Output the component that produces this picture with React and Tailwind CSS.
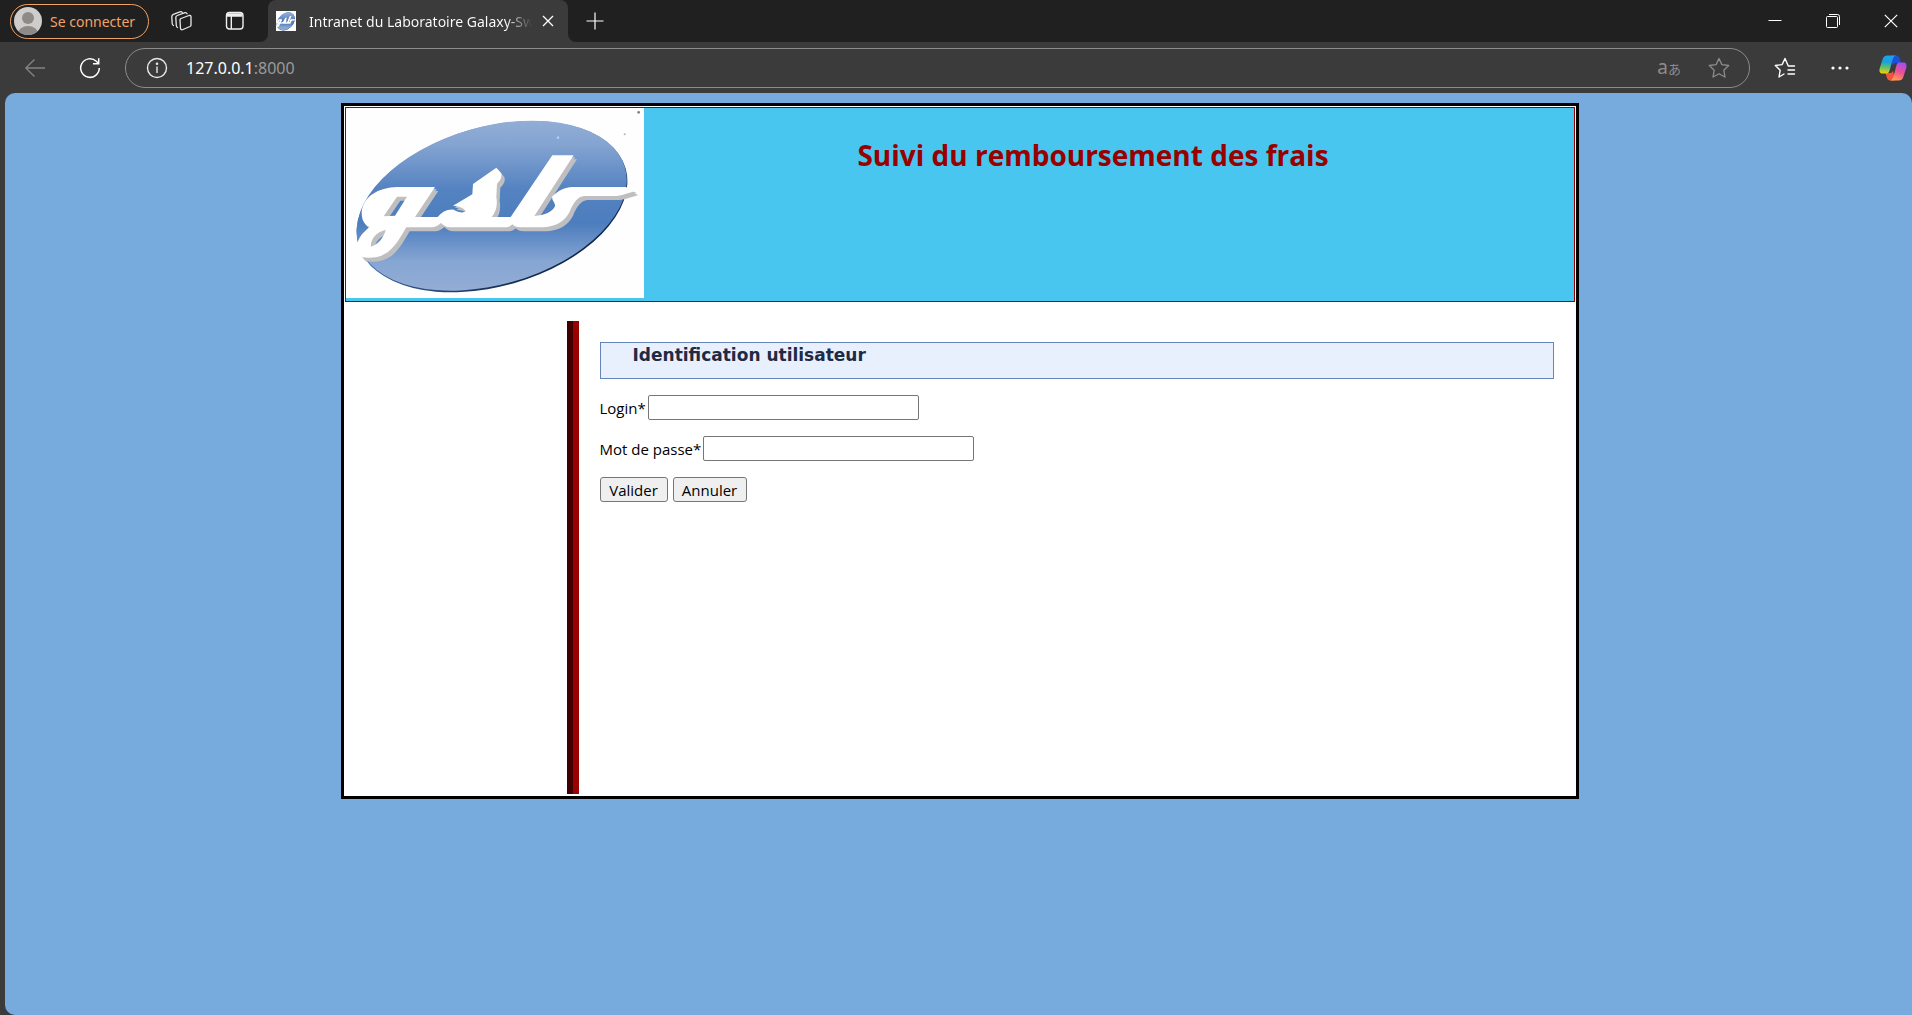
import React from 'react';

const GsbLogo = ({ id, className }) => (
  <svg viewBox="33 39 894 570" preserveAspectRatio="none" className={className} role="img" aria-label="Laboratoire Galaxy-Swiss Bourdin">
    <defs>
      <linearGradient id={`${id}-fill`} x1="0" y1="0" x2="0" y2="1">
        <stop offset="0" stopColor="#93aed6" />
        <stop offset="0.15" stopColor="#83a3d1" />
        <stop offset="0.4" stopColor="#5583c1" />
        <stop offset="0.6" stopColor="#4c7dbe" />
        <stop offset="0.82" stopColor="#86a5d2" />
        <stop offset="1" stopColor="#93aed6" />
      </linearGradient>
      <linearGradient id={`${id}-edge`} x1="0" y1="0" x2="0.6" y2="1">
        <stop offset="0" stopColor="#6c8fc4" />
        <stop offset="0.5" stopColor="#3f6aa8" />
        <stop offset="1" stopColor="#12284a" />
      </linearGradient>
      <clipPath id={`${id}-clip`}>
        <ellipse cx="470" cy="332" rx="416" ry="237" transform="rotate(-16 470 332)" />
      </clipPath>
      <path
        id={`${id}-text`}
        fillRule="evenodd"
        d="M300 276 L186 276 C130 278 84 304 80 352 C80 376 88 390 104 396 C84 412 68 430 66 452 C68 468 76 480 82 487 C110 491 136 487 158 472 C184 452 200 420 214 397 L292 397 C304 396 310 390 318 384 C326 392 334 397 346 397 L515 397 C522 396 528 392 532 388 C538 394 544 397 556 397 L626 397 C664 394 690 378 704 350 C716 322 728 304 748 303 L845 303 C868 300 886 292 900 288 L872 276 L712 276 C690 277 670 286 652 304 C648 316 662 322 660 334 C652 350 630 362 598 363 L716 181 L652 181 L527 366 L470 366 C484 350 488 330 484 306 L486 266 C496 256 502 246 498 234 L484 218 L414 267 L412 298 L354 332 C372 334 386 338 392 348 C384 356 372 352 356 344 C336 342 320 352 308 366 L240 366 Z
           M186 305 L216 305 L180 362 L146 364 Z
           M108 455 C106 434 122 412 152 404 C146 428 132 446 108 455 Z"
      />
    </defs>
    <rect x="33" y="39" width="894" height="570" fill="#fefefe" />
    <ellipse cx="471" cy="335" rx="417" ry="239" transform="rotate(-16 471 335)" fill={`url(#${id}-edge)`} />
    <g clipPath={`url(#${id}-clip)`}>
      <rect x="50" y="74" width="840" height="518" fill={`url(#${id}-fill)`} />
    </g>
    <use href={`#${id}-text`} x="10" y="12" fill="#bfbfc1" />
    <use href={`#${id}-text`} x="5" y="6" fill="#bfbfc1" />
    <use href={`#${id}-text`} fill="#ffffff" />
    <circle cx="669" cy="128" r="4" fill="#a9d0ee" />
    <circle cx="911" cy="52" r="4" fill="#7d7d7d" />
    <circle cx="869" cy="118" r="3" fill="#b5b5b5" />
  </svg>
);

const TabBar = () => (
  <div className="flex h-[42px] items-center bg-[#202020] text-white">
    <button className="ml-[10px] flex h-[35px] w-[139px] shrink-0 items-center gap-2 rounded-full border border-[#f0a368] pl-[3px] text-[14px] whitespace-nowrap text-[#f0a368]">
      <svg viewBox="0 0 28 28" className="size-7 shrink-0">
        <defs>
          <clipPath id="avatar">
            <circle cx="14" cy="14" r="14" />
          </clipPath>
        </defs>
        <g clipPath="url(#avatar)">
          <rect width="28" height="28" fill="#cfcdcb" />
          <circle cx="14" cy="11" r="6" fill="#8d8a88" />
          <ellipse cx="14" cy="27" rx="10" ry="8" fill="#8d8a88" />
        </g>
      </svg>
      Se connecter
    </button>
    <button aria-label="Espaces de travail" className="ml-5 shrink-0">
      <svg viewBox="0 0 24 24" className="size-6" fill="none" stroke="#e8e8e8" strokeWidth="1.3" strokeLinejoin="round" strokeLinecap="round">
        <path d="M12 9.500 L20 6.500 Q22 6 22 8 V16 Q22 17 21 17.500 L14 20.500 Q12 21.500 11.500 19.500 L11 11 Q11 10 12 9.500 Z" />
        <path d="M8.500 18.500 Q7.500 18 7.300 16.500 L6.800 8.500 Q6.800 7 8.300 6.500 L16 3.700 Q17.500 3.300 18 4.800" />
        <path d="M4.500 16.500 Q3.300 16 3.200 14.500 L2.800 7.500 Q2.800 6 4.300 5.300 L11 2.800 Q12.500 2.300 13.300 3.500" />
      </svg>
    </button>
    <button aria-label="Onglets verticaux" className="ml-8 shrink-0">
      <svg viewBox="0 0 20 20" className="size-5" fill="none" stroke="#f0f0f0" strokeWidth="1.4">
        <rect x="1.500" y="1.500" width="16.500" height="16.500" rx="3" />
        <path d="M2 4 H17.500" strokeWidth="3.500" />
        <path d="M6.300 5 V18" />
      </svg>
    </button>
    <div className="ml-[15px] flex h-full shrink-0 items-end">
      <div className="size-2 bg-[#3b3b3b]">
        <div className="size-2 rounded-br-lg bg-[#202020]" />
      </div>
      <div className="flex h-full w-[300px] items-center rounded-t-lg bg-[#3b3b3b] pr-3 pl-2">
        <GsbLogo id="favicon" className="size-5 shrink-0" />
        <span className="ml-[13px] w-[223px] bg-linear-to-r from-white from-88% to-transparent bg-clip-text text-[14px] whitespace-nowrap text-transparent">
          Intranet du Laboratoire Galaxy-Sw
        </span>
        <button aria-label="Fermer l'onglet" className="ml-[10px] shrink-0">
          <svg viewBox="0 0 12 12" className="size-3" stroke="#fff" strokeWidth="1.3">
            <path d="M1 1 L11 11 M11 1 L1 11" />
          </svg>
        </button>
      </div>
      <div className="size-2 bg-[#3b3b3b]">
        <div className="size-2 rounded-bl-lg bg-[#202020]" />
      </div>
    </div>
    <button aria-label="Nouvel onglet" className="ml-[10px] shrink-0">
      <svg viewBox="0 0 18 18" className="size-[18px]" stroke="#fff" strokeWidth="1.2">
        <path d="M9 0.500 V17.500 M0.500 9 H17.500" />
      </svg>
    </button>
    <div className="mr-[14px] ml-auto flex items-center gap-[44px]">
      <button aria-label="Réduire">
        <svg viewBox="0 0 14 14" className="size-[14px]" stroke="#fff" strokeWidth="1">
          <path d="M0.500 6.500 H13.500" />
        </svg>
      </button>
      <button aria-label="Restaurer">
        <svg viewBox="0 0 14 14" className="size-[14px]" fill="none" stroke="#fff" strokeWidth="1">
          <rect x="0.500" y="2.500" width="11" height="11" rx="1" />
          <path d="M3 0.500 H11.500 Q13.500 0.500 13.500 2.500 V11" />
        </svg>
      </button>
      <button aria-label="Fermer">
        <svg viewBox="0 0 14 14" className="size-[14px]" stroke="#fff" strokeWidth="1.2">
          <path d="M0.800 0.800 L13.200 13.200 M13.200 0.800 L0.800 13.200" />
        </svg>
      </button>
    </div>
  </div>
);

const AddressBar = () => (
  <div className="flex h-[51px] items-center bg-[#3b3b3b]">
    <button aria-label="Précédent" className="ml-6 shrink-0">
      <svg viewBox="0 0 22 20" className="h-5 w-[22px]" fill="none" stroke="#848484" strokeWidth="1.3">
        <path d="M10.500 1.500 L1.800 10 L10.500 18.500 M2 10 H21" />
      </svg>
    </button>
    <button aria-label="Actualiser" className="ml-[33px] shrink-0">
      <svg viewBox="0 0 22 22" className="size-[22px]" fill="none" stroke="#fff" strokeWidth="1.5">
        <path d="M20.300 11 A9.300 9.300 0 1 1 17.300 4.200 L19.300 6.300" />
        <path d="M19.700 1.200 V6.800 H14" />
      </svg>
    </button>
    <div className="ml-[24px] flex h-10 flex-1 items-center rounded-full border border-[#8c8c8c] pr-[19px] pl-5">
      <svg viewBox="0 0 22 22" className="size-[22px] shrink-0" fill="none" stroke="#e8e8e8" strokeWidth="1.4">
        <circle cx="11" cy="11" r="9.500" />
        <path d="M11 9.500 V16" />
        <circle cx="11" cy="6.700" r="0.600" fill="#e8e8e8" />
      </svg>
      <span className="ml-[18px] text-[16px] text-white">
        127.0.0.1<span className="text-[#9a9a9a]">:8000</span>
      </span>
      <button aria-label="Traduire" className="ml-auto flex items-baseline text-[#8c8c8c]">
        <span className="text-[19px] leading-5">a</span>
        <span className="font-['Noto_Sans_CJK_JP',sans-serif] text-[13px] leading-5">あ</span>
      </button>
      <button aria-label="Ajouter aux favoris" className="ml-[27px]">
        <svg viewBox="0 0 22 22" className="size-[22px]" fill="none" stroke="#8c8c8c" strokeWidth="1.3" strokeLinejoin="round">
          <path d="M11 1.500 L13.900 7.600 L20.700 8.500 L15.800 13.200 L17 20 L11 16.700 L5 20 L6.200 13.200 L1.300 8.500 L8.100 7.600 Z" />
        </svg>
      </button>
    </div>
    <button aria-label="Favoris" className="ml-6 shrink-0">
      <svg viewBox="0 0 22 22" className="size-[22px]" fill="none" stroke="#fff" strokeWidth="1.4" strokeLinejoin="round" strokeLinecap="round">
        <path d="M20.500 9 H14.300 L11 1.500 L8.100 7.600 L1.300 8.500 L6.200 13.200 L5 20 L10 17" />
        <path d="M14 13 H20.500 M14 17 H20.500" />
      </svg>
    </button>
    <button aria-label="Paramètres et plus" className="ml-[35px] shrink-0">
      <svg viewBox="0 0 18 6" className="h-[6px] w-[18px]" fill="#fff">
        <circle cx="2" cy="3" r="1.600" />
        <circle cx="9" cy="3" r="1.600" />
        <circle cx="16" cy="3" r="1.600" />
      </svg>
    </button>
    <button aria-label="Copilot" className="mr-[5px] ml-[30px] shrink-0">
      <svg viewBox="0 0 28 26" className="h-[26px] w-7">
        <defs>
          <linearGradient id="cp-left" x1="0.300" y1="0" x2="0.200" y2="1">
            <stop offset="0" stopColor="#1ba1f2" />
            <stop offset="0.350" stopColor="#1f9fd8" />
            <stop offset="0.650" stopColor="#5fc26a" />
            <stop offset="1" stopColor="#ffd000" />
          </linearGradient>
          <linearGradient id="cp-right" x1="0.700" y1="0" x2="0.300" y2="1">
            <stop offset="0" stopColor="#a34df0" />
            <stop offset="0.500" stopColor="#ee5090" />
            <stop offset="1" stopColor="#ffa04f" />
          </linearGradient>
        </defs>
        <path d="M12 0.500 H17 C19.500 0.500 20.300 2 21 4.500 L22 8 H17 C15 8 14.500 9 14 10.500 L11 3 Z" fill="#1c50d8" />
        <path d="M16 25.500 H11.500 C9 25.500 8.200 24 7.500 21.500 L6.500 18 H11 C13 18 13.500 17 14 15.500 Z" fill="#f2553c" />
        <path d="M8.500 0.500 H17 C14.500 1 14 3 13 6.500 L11 14 C10 17.500 9.500 18.500 7 18.500 H3.500 C0.500 18.500 0 16 0.800 13 L3.500 4.500 C4.500 1.500 6 0.500 8.500 0.500 Z" fill="url(#cp-left)" />
        <path d="M19.500 25.500 H11 C13.500 25 14 23 15 19.500 L17 12 C18 8.500 18.500 7.500 21 7.500 H24.500 C27.500 7.500 28 10 27.200 13 L24.500 21.500 C23.500 24.500 22 25.500 19.500 25.500 Z" fill="url(#cp-right)" />
      </svg>
    </button>
  </div>
);

const LoginForm = () => (
  <form className="flex flex-col items-start gap-4" onSubmit={(e) => e.preventDefault()}>
    <h2 className="h-[37px] w-full border border-[#6685bb] bg-[#e8f0fe] pl-8 font-['DejaVu_Sans',sans-serif] text-[17px] leading-6 font-bold text-[#1f2a44]">
      Identification utilisateur
    </h2>
    <div className="flex items-center gap-[2px]">
      <label htmlFor="login">Login*</label>
      <input id="login" type="text" className="h-[25px] w-[271px] rounded-xs border border-[#767676] bg-white px-1" />
    </div>
    <div className="flex items-center gap-[2px]">
      <label htmlFor="mdp">Mot de passe*</label>
      <input id="mdp" type="password" className="h-[25px] w-[271px] rounded-xs border border-[#767676] bg-white px-1" />
    </div>
    <div className="flex gap-[5px]">
      <button type="submit" className="h-[25px] w-[68px] rounded-[3px] border border-[#767676] bg-[#efefef] leading-5">
        Valider
      </button>
      <button type="reset" className="h-[25px] w-[74px] rounded-[3px] border border-[#767676] bg-[#efefef] leading-5">
        Annuler
      </button>
    </div>
  </form>
);

const App = () => {
  return (
    <div className="flex min-h-screen flex-col bg-[#3b3b3b] font-['Noto_Sans','Open_Sans',sans-serif]">
      <TabBar />
      <AddressBar />
      <div className="ml-[5px] flex-1 rounded-l-[10px] rounded-tr-[10px] bg-[#77aadd] pt-[10px] pl-[3px]">
        <div className="mx-auto w-[65%] border-[3px] border-black bg-white p-px font-['Open_Sans','Noto_Sans',sans-serif] text-[15px] leading-5 text-black">
          <header className="flex border border-[#990000] bg-[#48c6ef] pb-[3px]">
            <GsbLogo id="logo" className="h-[190px] w-[298px] shrink-0" />
            <h1 className="flex-1 pt-[27px] pr-8 text-center text-[28px] leading-10 font-bold text-[#990000]">
              Suivi du remboursement des frais
            </h1>
          </header>
          <div className="mt-[19px] mb-px flex min-h-[473px]">
            <nav className="w-[18%]" />
            <div className="w-[12px] border-l-[6px] border-[#400000] bg-[#990000]" />
            <main className="flex-1 p-[21px]">
              <LoginForm />
            </main>
          </div>
        </div>
      </div>
    </div>
  );
};

export default App;
